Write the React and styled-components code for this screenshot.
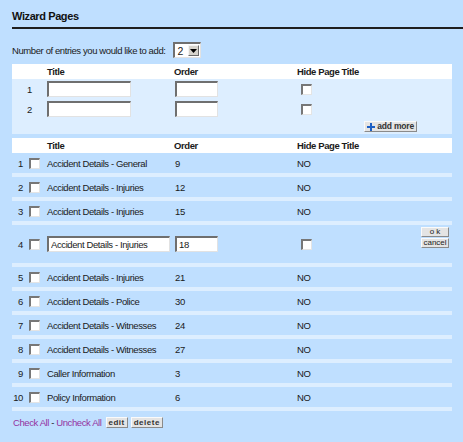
import React from 'react'
import styled, { createGlobalStyle } from 'styled-components'

const GlobalStyle = createGlobalStyle`
  body {
    margin: 0;
    background: #bfdfff;
    font-family: "Liberation Sans", Arial, sans-serif;
    font-size: 9.5px;
    letter-spacing: -0.4px;
    color: #1a1a1a;
  }
`

const ADD_COLS = '35px 127px 123px 1fr'
const LIST_COLS = '14px 21px 127px 123px 1fr 42px'

const pages = [
  { title: 'Accident Details - General', order: 9 },
  { title: 'Accident Details - Injuries', order: 12 },
  { title: 'Accident Details - Injuries', order: 15 },
  { title: 'Accident Details - Injuries', order: 18, editing: true },
  { title: 'Accident Details - Injuries', order: 21 },
  { title: 'Accident Details - Police', order: 30 },
  { title: 'Accident Details - Witnesses', order: 24 },
  { title: 'Accident Details - Witnesses', order: 27 },
  { title: 'Caller Information', order: 3 },
  { title: 'Policy Information', order: 6 },
]

const App = () => (
  <>
    <GlobalStyle />
    <Page>
      <Heading>Wizard Pages</Heading>

      <CountRow>
        <span>Number of entries you would like to add:</span>
        <Select>
          <span>2</span>
          <SelectArrow>
            <svg width="7" height="4" viewBox="0 0 7 4"><path d="M0 0h7L3.5 4z" fill="#000" /></svg>
          </SelectArrow>
        </Select>
      </CountRow>

      <Table>
        <HeadRow $cols={ADD_COLS}>
          <span />
          <span>Title</span>
          <span>Order</span>
          <span>Hide Page Title</span>
        </HeadRow>
        <AddBody>
          {[1, 2].map(n => (
            <AddRow key={n} $cols={ADD_COLS}>
              <Num $center>{n}</Num>
              <span><TextInput $w={84} /></span>
              <span><TextInput $w={43} $offset={1} /></span>
              <span><Check type="checkbox" $offset={4} /></span>
            </AddRow>
          ))}
          <AddMoreRow>
            <SmallButton>
              <svg width="8" height="8" viewBox="0 0 8 8">
                <rect x="3" y="0" width="2" height="8" fill="#1d5fc4" />
                <rect x="0" y="3" width="8" height="2" fill="#1d5fc4" />
              </svg>
              add more
            </SmallButton>
          </AddMoreRow>
        </AddBody>
      </Table>

      <ListTable>
        <HeadRow $cols={LIST_COLS}>
          <span />
          <span />
          <span>Title</span>
          <span>Order</span>
          <span>Hide Page Title</span>
          <span />
        </HeadRow>
        {pages.map((p, i) => (
          <DataRow key={i} $cols={LIST_COLS} $editing={p.editing}>
            <Num>{i + 1}</Num>
            <span><Check type="checkbox" $offset={3} /></span>
            {p.editing ? (
              <>
                <span><TextInput $w={123} defaultValue={p.title} /></span>
                <span><TextInput $w={43} $offset={1} defaultValue={p.order} /></span>
                <span><Check type="checkbox" $offset={4} /></span>
                <Actions>
                  <StackButton>o k</StackButton>
                  <StackButton>cancel</StackButton>
                </Actions>
              </>
            ) : (
              <>
                <span>{p.title}</span>
                <Cell $offset={1}>{p.order}</Cell>
                <span>NO</span>
                <span />
              </>
            )}
          </DataRow>
        ))}
      </ListTable>

      <Footer>
        <Link href="#">Check All</Link>
        <span>&nbsp;-&nbsp;</span>
        <Link href="#">Uncheck All</Link>
        <Buttons>
          <SmallButton $bold>edit</SmallButton>
          <SmallButton $bold>delete</SmallButton>
        </Buttons>
      </Footer>
    </Page>
  </>
)

const Page = styled.div`
  padding-left: 12px;
  height: 442px;
`

const Heading = styled.h1`
  margin: 0;
  padding: 10px 0 4px;
  font-size: 11px;
  line-height: 13px;
  font-weight: bold;
  color: #111;
  border-bottom: 2px solid #1e1e1e;
`

const CountRow = styled.div`
  display: flex;
  align-items: center;
  gap: 7px;
  height: 16px;
  margin-top: 13px;
`

const Select = styled.div`
  display: flex;
  align-items: center;
  justify-content: space-between;
  box-sizing: border-box;
  width: 28px;
  height: 16px;
  padding: 0 1px 0 3px;
  background: #fff;
  border-style: solid;
  border-width: 2px 1px 1px 2px;
  border-color: #6f6f6f #e2e2e2 #e2e2e2 #6f6f6f;
  font-size: 10.5px;
`

const SelectArrow = styled.span`
  display: flex;
  align-items: center;
  justify-content: center;
  box-sizing: border-box;
  width: 11px;
  height: 11px;
  background: #d6d3cc;
  border: 1px solid;
  border-color: #f4f4f4 #6a6a6a #6a6a6a #f4f4f4;
`

const Table = styled.div`
  width: 440px;
  margin-top: 6px;
`

const ListTable = styled(Table)`
  margin-top: 4px;
`

const HeadRow = styled.div`
  display: grid;
  grid-template-columns: ${p => p.$cols};
  align-items: center;
  height: 15px;
  background: #fff;
  font-weight: bold;
`

const AddBody = styled.div`
  background: #ddeeff;
`

const AddRow = styled.div`
  display: grid;
  grid-template-columns: ${p => p.$cols};
  align-items: center;
  height: 20px;
`

const AddMoreRow = styled.div`
  display: flex;
  justify-content: flex-end;
  align-items: flex-start;
  height: 15px;
  padding: 2px 35px 0 0;
  box-sizing: border-box;
`

const DataRow = styled.div`
  display: grid;
  grid-template-columns: ${p => p.$cols};
  align-items: center;
  height: ${p => (p.$editing ? 38 : 20)}px;
  border-bottom: 4px solid #ddeeff;
`

const Num = styled.span`
  text-align: ${p => (p.$center ? 'center' : 'right')};
  padding-right: ${p => (p.$center ? 0 : 3)}px;
`

const Cell = styled.span`
  padding-left: ${p => p.$offset || 0}px;
`

const TextInput = styled.input`
  display: block;
  box-sizing: border-box;
  width: ${p => p.$w}px;
  height: 16px;
  margin: 0 0 0 ${p => p.$offset || 0}px;
  padding: 0 2px;
  background: #fff;
  border-style: solid;
  border-width: 2px 1px 1px 2px;
  border-color: #6f6f6f #e2e2e2 #e2e2e2 #6f6f6f;
  font: 9.5px "Liberation Sans", Arial, sans-serif;
  letter-spacing: -0.4px;
  color: #1a1a1a;
  outline: none;
`

const Check = styled.input`
  appearance: none;
  display: block;
  box-sizing: border-box;
  width: 11px;
  height: 11px;
  margin: 0 0 0 ${p => p.$offset || 0}px;
  background: #fff;
  border-style: solid;
  border-width: 2px 1px 1px 2px;
  border-color: #777 #e4e4e4 #e4e4e4 #777;
`

const Actions = styled.div`
  align-self: start;
  display: flex;
  flex-direction: column;
  align-items: flex-end;
  gap: 1px;
  padding: 2px 3px 0 0;
`

const SmallButton = styled.button`
  display: inline-flex;
  align-items: center;
  gap: 2px;
  box-sizing: border-box;
  height: 11px;
  margin: 0;
  padding: 0 2px;
  background: #e4e4e4;
  border: 1px solid;
  border-color: #fafafa #8a8a8a #8a8a8a #fafafa;
  font: ${p => (p.$bold ? 'bold 8px' : 'bold 8.5px')} "Liberation Sans", Arial, sans-serif;
  letter-spacing: ${p => (p.$bold ? '0.5px' : '-0.2px')};
  color: #333;
  line-height: 9px;
`

const StackButton = styled.button`
  box-sizing: border-box;
  width: 28px;
  height: 10px;
  margin: 0;
  padding: 0;
  background: #e4e4e4;
  border: 1px solid;
  border-color: #fafafa #8a8a8a #8a8a8a #fafafa;
  font: 8px "Liberation Sans", Arial, sans-serif;
  letter-spacing: 0;
  line-height: 8px;
  color: #222;
`

const Footer = styled.div`
  display: flex;
  align-items: center;
  height: 11px;
  margin-top: 6px;
  padding-left: 1px;
`

const Link = styled.a`
  color: #94329f;
  text-decoration: none;
`

const Buttons = styled.div`
  display: flex;
  gap: 3px;
  margin-left: 4px;
`

export default App
